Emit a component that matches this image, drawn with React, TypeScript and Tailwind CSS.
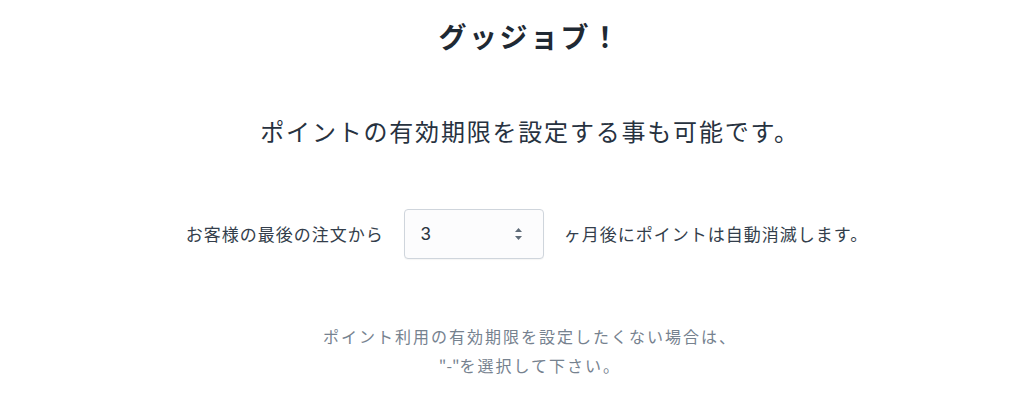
import React from "react";

export default function App() {
  const font = { fontFamily: '"Noto Sans CJK JP", "Noto Sans", sans-serif' };
  return (
    <div className="w-[1023px] h-[412px] bg-white overflow-hidden" style={font}>
      <div className="flex flex-col items-center pl-[37px] pt-[16px]">
        <h1 className="text-[28px] leading-[40px] h-[40px] font-bold tracking-[2.5px] text-[#1f2933]">
          グッジョブ！
        </h1>
        <p className="mt-[55px] text-[24px] leading-[40px] tracking-[1.8px] text-[#27323f]">
          ポイントの有効期限を設定する事も可能です。
        </p>
        <div className="mt-[58px] -ml-[6px] flex items-center text-[17px] tracking-[1px] text-[#333e4b]">
          <span>お客様の最後の注文から</span>
          <div className="mx-[20px] w-[140px] h-[50px] rounded-[4px] border border-[#cfd5dc] bg-[#fcfcfd] flex items-center justify-between pl-[16px] pr-[20px] shadow-[0_1px_1px_rgba(0,0,0,0.04)]">
            <span className="text-[18px] text-[#2b3440] tracking-normal" style={{ fontFamily: '"Liberation Sans", "Noto Sans CJK JP", sans-serif' }}>3</span>
            <svg width="9" height="14" viewBox="0 0 9 14">
              <path d="M4.5 1 L8 5 L1 5 Z" fill="#5f6b78" />
              <path d="M4.5 13 L8 9 L1 9 Z" fill="#5f6b78" />
            </svg>
          </div>
          <span>ヶ月後にポイントは自動消滅します。</span>
        </div>
        <div className="mt-[63px] text-center text-[16px] leading-[29px] tracking-[2px] text-[#76828f]">
          <p>ポイント利用の有効期限を設定したくない場合は、</p>
          <p>
            <span className="tracking-normal">"-"</span>を選択して下さい。
          </p>
        </div>
      </div>
    </div>
  );
}
